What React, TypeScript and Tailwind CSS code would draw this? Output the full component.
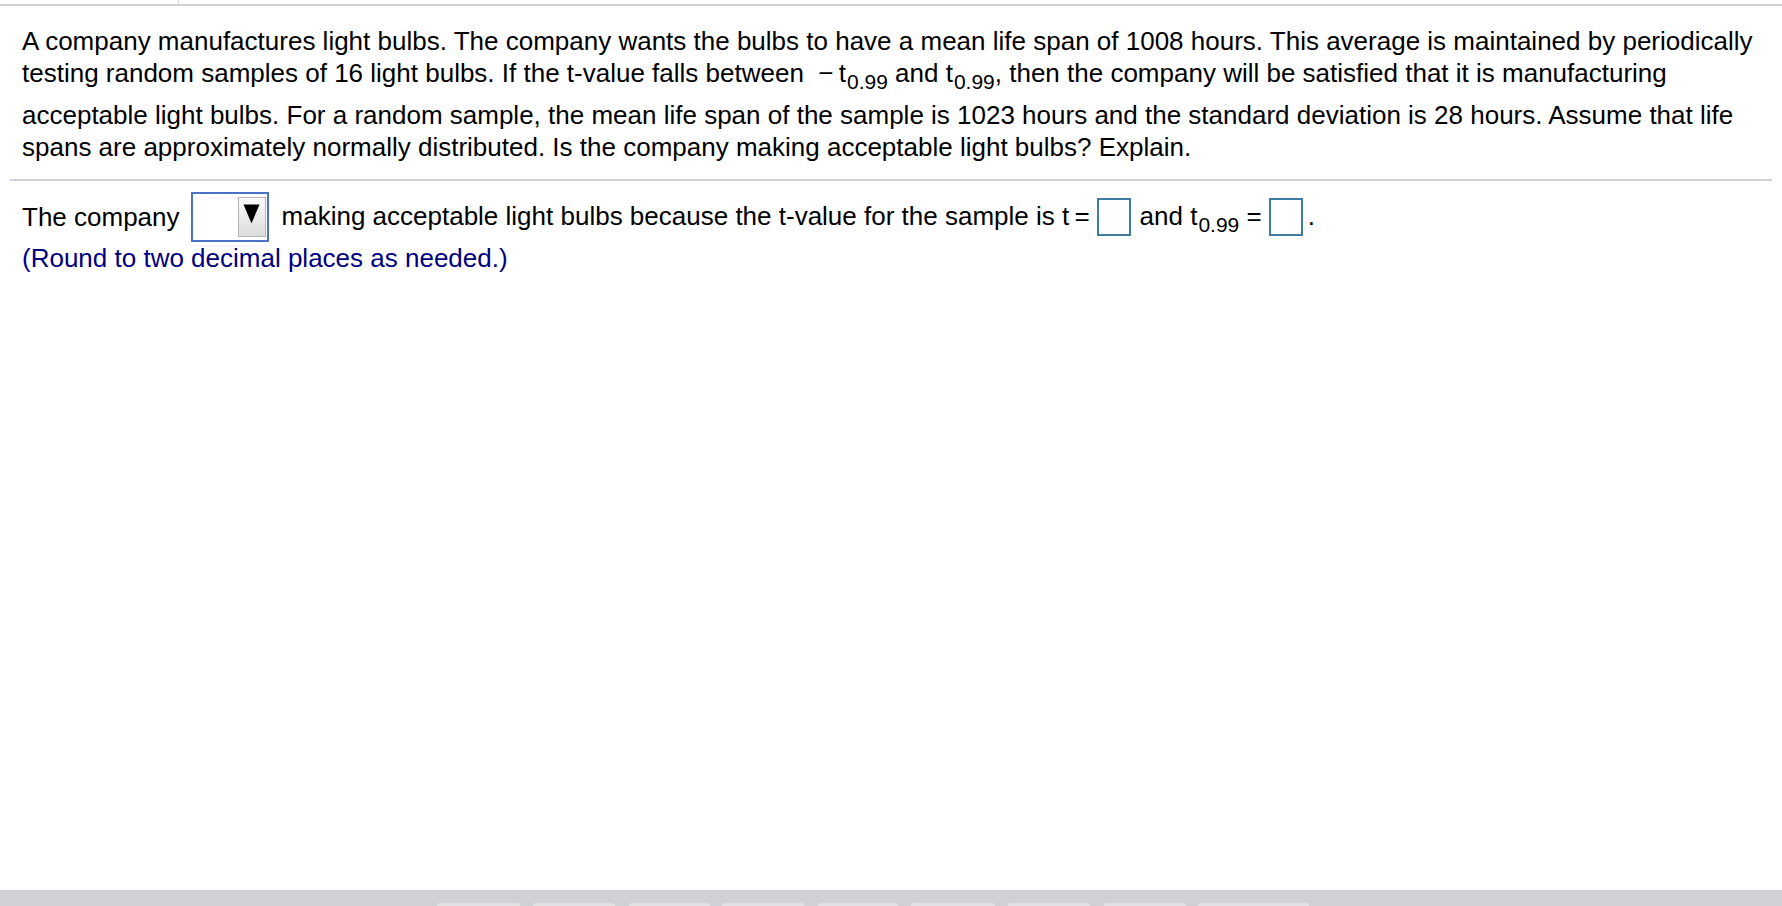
import React from 'react'

const tabs = [
  { left: 437, width: 83 },
  { left: 533, width: 82 },
  { left: 629, width: 81 },
  { left: 722, width: 82 },
  { left: 818, width: 80 },
  { left: 911, width: 84 },
  { left: 1008, width: 82 },
  { left: 1104, width: 82 },
  { left: 1198, width: 111 },
]

// subscript like "0.99", pb grows the line box a little like the original renderer does
function Sub({ children, tall }: { children: React.ReactNode; tall?: boolean }) {
  return (
    <span className={`ml-[1px] inline-block align-[-7px] text-[21px] leading-[20px] ${tall ? 'pb-[7px]' : ''}`}>
      {children}
    </span>
  )
}

function AnswerBox() {
  return <span className="ml-[7px] mr-[9px] inline-block h-[38px] w-[34px] border-2 border-[#3d7ba3] bg-white align-[-11px]" />
}

export default function App() {
  return (
    <div className="flex h-[906px] w-full flex-col bg-white font-['Liberation_Sans',Arial,sans-serif] text-[26px] text-black">
      {/* top strip */}
      <div className="h-[4px] pl-[178px]">
        <div className="h-full w-[1px] bg-[#d6d8de]" />
      </div>
      <div className="h-[2px] bg-[#cfd1da]" />

      <div className="px-[10px]">
        <p className="whitespace-nowrap px-[12px] pt-[19px] pb-[16px] leading-[32px]">
          A company manufactures light bulbs. The company wants the bulbs to have a mean life span of 1008 hours. This average is maintained by periodically
          <br />
          testing random samples of 16 light bulbs. If the t-value falls between&nbsp; −&thinsp;t<Sub tall>0.99</Sub> and t<Sub tall>0.99</Sub>, then the company will be satisfied that it is manufacturing
          <br />
          acceptable light bulbs. For a random sample, the mean life span of the sample is 1023 hours and the standard deviation is 28 hours. Assume that life
          <br />
          spans are approximately normally distributed. Is the company making acceptable light bulbs? Explain.
        </p>
        <div className="h-[2px] bg-[#cfd1da]" />

        <div className="px-[12px] pt-[11px]">
          <div className="flex items-center whitespace-nowrap leading-[32px]">
            <span>The company</span>
            <span className="ml-[11px] mr-[13px] flex h-[50px] w-[78px] items-center justify-end border-2 border-[#4a72c6] bg-white pr-[1px]">
              <span className="flex h-[40px] w-[28px] items-start justify-center border border-[#b5b5b5] bg-gradient-to-b from-[#fbfbfb] to-[#dcdcdc] pt-[6px]">
                <svg width="17" height="20" viewBox="0 0 17 20">
                  <polygon points="0.5,0.5 16.5,0.5 8.5,19.5" fill="#000" />
                </svg>
              </span>
            </span>
            <span>
              making acceptable light bulbs because the t-value for the sample is t&thinsp;=
              <AnswerBox />
              and t<Sub>0.99</Sub> =<AnswerBox />
              <span className="-ml-[4px]">.</span>
            </span>
          </div>
          <p className="leading-[32px] text-[#00007f]">(Round to two decimal places as needed.)</p>
        </div>
      </div>

      <div className="flex-1" />

      {/* bottom toolbar */}
      <div className="relative h-[16px] bg-[#d0d1d6]">
        {tabs.map((t) => (
          <div
            key={t.left}
            className="absolute top-[13px] h-[6px] rounded-t-[3px] bg-[#e2e2e6]"
            style={{ left: t.left, width: t.width }}
          />
        ))}
      </div>
    </div>
  )
}
